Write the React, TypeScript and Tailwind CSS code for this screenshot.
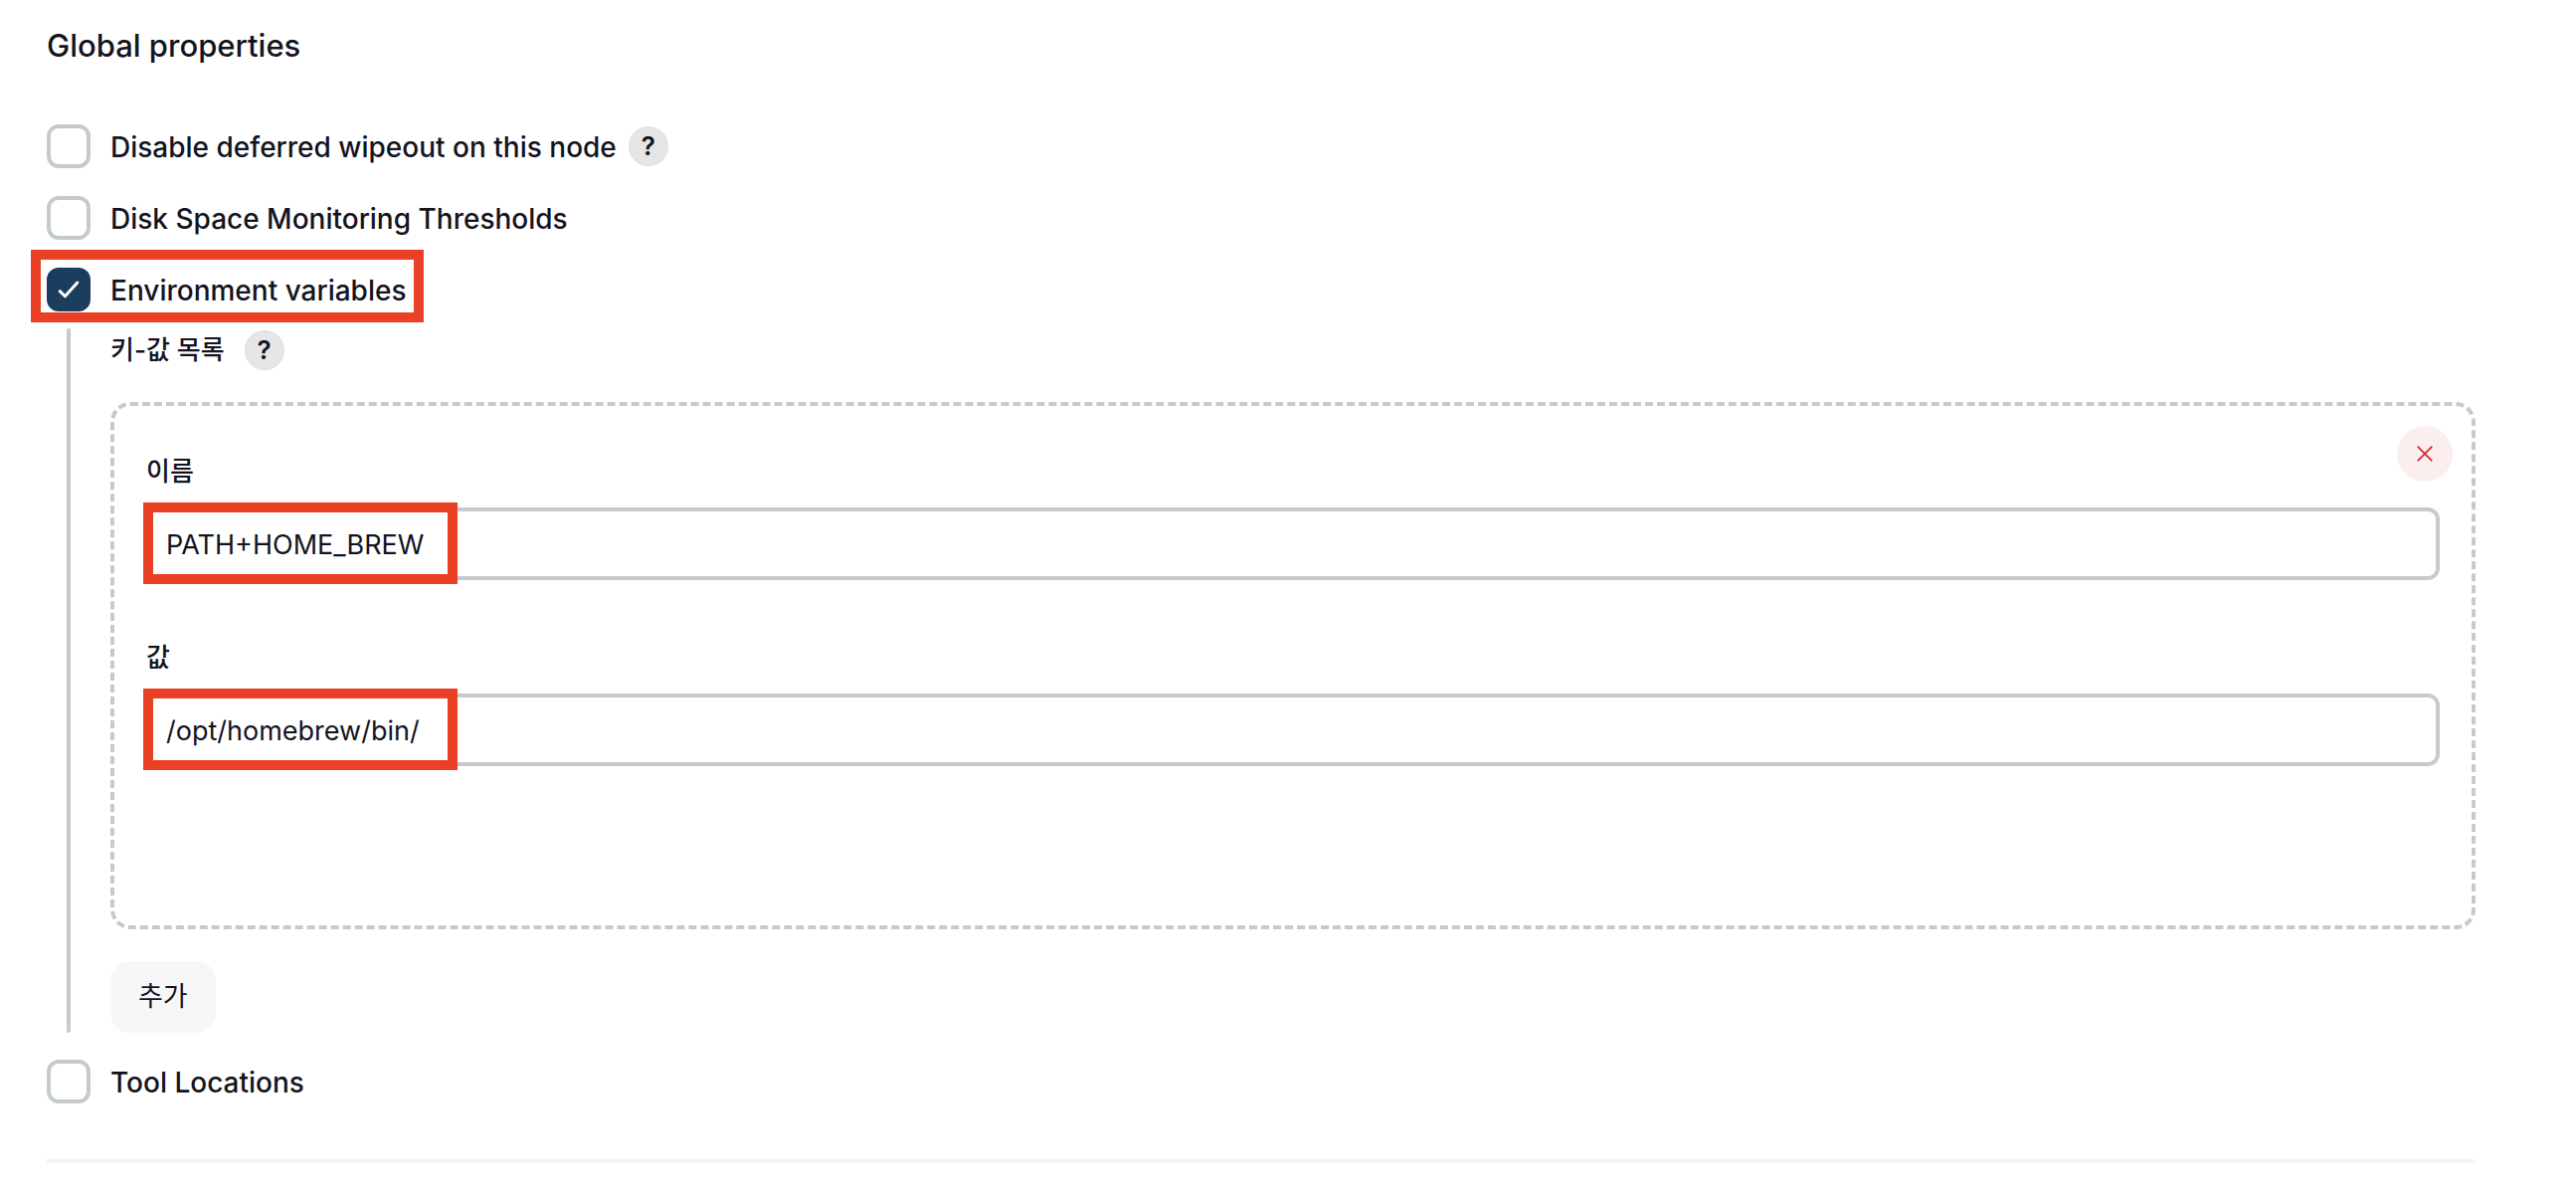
import React, { useState } from 'react';

const FONT = "font-['Inter','Noto_Sans_CJK_KR',sans-serif]";

// =====================
// Small parts
// =====================
const HelpButton: React.FC<{ label: string }> = ({ label }) => (
    <button
        type="button"
        aria-label={label}
        className="flex h-10 w-10 shrink-0 items-center justify-center rounded-full border-2 border-[#e3e3e3] bg-[#e6e6e6] text-[26px] leading-[26px] font-semibold"
    >
        ?
    </button>
);

const Highlight: React.FC<{ className: string }> = ({ className }) => (
    <span className={`pointer-events-none absolute border-[10px] border-[#ea4025] ${className}`} />
);

interface CheckRowProps {
    id: string;
    label: string;
    checked: boolean;
    onChange: (checked: boolean) => void;
    help?: boolean;
    highlighted?: boolean;
}

const CheckRow: React.FC<CheckRowProps> = ({ id, label, checked, onChange, help, highlighted }) => (
    <div className="relative flex h-11 items-center">
        <span className="relative flex h-11 w-11 shrink-0">
            <input
                id={id}
                type="checkbox"
                checked={checked}
                onChange={(e) => onChange(e.target.checked)}
                className="h-11 w-11 appearance-none rounded-[12px] border-4 border-[#c4cbce] bg-white checked:border-[#1b3d5e] checked:bg-[#1b3d5e]"
            />
            {checked && (
                <svg viewBox="0 0 44 44" fill="none" className="pointer-events-none absolute inset-0 h-11 w-11">
                    <path
                        d="M13.2 23.6L18.4 28.8L30.8 15"
                        stroke="white"
                        strokeWidth="3"
                        strokeLinecap="round"
                        strokeLinejoin="round"
                    />
                </svg>
            )}
        </span>
        <label htmlFor={id} className="pt-0.5 pl-5 text-[28px] leading-10 font-medium">
            {label}
        </label>
        {help && (
            <div className="ml-3">
                <HelpButton label={`Help for feature: ${label}`} />
            </div>
        )}
        {highlighted && <Highlight className="-top-[18px] -left-4 h-[73px] w-[395px]" />}
    </div>
);

interface TextFieldProps {
    id: string;
    label: string;
    value: string;
    onChange: (value: string) => void;
}

const TextField: React.FC<TextFieldProps> = ({ id, label, value, onChange }) => (
    <div>
        <label htmlFor={id} className="block text-[26px] leading-10 font-medium">
            {label}
        </label>
        <div className="relative mt-4">
            <input
                id={id}
                type="text"
                value={value}
                onChange={(e) => onChange(e.target.value)}
                className="block h-[73px] w-full rounded-[12px] border-4 border-[#c4cbce] bg-white px-4 pt-0.5 text-[27px]"
            />
            <Highlight className="-top-[5px] -left-[3px] h-[82px] w-[316px]" />
        </div>
    </div>
);

// =====================
// Page
// =====================
const App: React.FC = () => {
    const [checks, setChecks] = useState({ wipeout: false, disk: false, env: true, tools: false });
    const [variable, setVariable] = useState({ name: 'PATH+HOME_BREW', value: '/opt/homebrew/bin/' });

    const toggle = (key: keyof typeof checks) => (checked: boolean) =>
        setChecks((prev) => ({ ...prev, [key]: checked }));

    return (
        <main className={`bg-white pt-[26px] pr-[101px] pb-7 pl-[47px] text-[#14141f] ${FONT}`}>
            <h2 className="text-[31px] leading-10 font-medium">Global properties</h2>

            <div className="mt-[59px] flex flex-col gap-7">
                <CheckRow
                    id="wipeout"
                    label="Disable deferred wipeout on this node"
                    checked={checks.wipeout}
                    onChange={toggle('wipeout')}
                    help
                />
                <CheckRow
                    id="disk"
                    label="Disk Space Monitoring Thresholds"
                    checked={checks.disk}
                    onChange={toggle('disk')}
                />
                <CheckRow
                    id="env"
                    label="Environment variables"
                    checked={checks.env}
                    onChange={toggle('env')}
                    highlighted
                />
            </div>

            {/* Nested settings, tied to the checkbox by the vertical rule */}
            <div className="mt-[17px] flex gap-10 pl-5">
                <div className="w-1 shrink-0 rounded-full bg-[#c4cbce]" />
                <div className="min-w-0 flex-1">
                    <div className="flex items-center gap-5 pt-0.5">
                        <h3 className="text-[26px] leading-10 font-medium">키-값 목록</h3>
                        <HelpButton label="키-값 목록" />
                    </div>

                    <div className="relative mt-8 rounded-[20px] border-4 border-dashed border-[#c4cbce] px-8 pt-[46px] pb-40">
                        <button
                            type="button"
                            aria-label="삭제"
                            className="absolute top-5 right-[19px] flex h-14 w-14 items-center justify-center rounded-full bg-[#fbeeee] text-[#d92b33]"
                        >
                            <svg viewBox="0 0 16 16" fill="none" className="h-4 w-4">
                                <path d="M0.7 0.7L15.3 15.3M15.3 0.7L0.7 15.3" stroke="currentColor" strokeWidth="1.8" />
                            </svg>
                        </button>
                        <div className="flex flex-col gap-[58px]">
                            <TextField
                                id="env-name"
                                label="이름"
                                value={variable.name}
                                onChange={(name) => setVariable({ ...variable, name })}
                            />
                            <TextField
                                id="env-value"
                                label="값"
                                value={variable.value}
                                onChange={(value) => setVariable({ ...variable, value })}
                            />
                        </div>
                    </div>

                    <button
                        type="button"
                        className="mt-8 block h-[72px] rounded-[20px] bg-[#f7f7fa] px-7 text-[27px] leading-10"
                    >
                        추가
                    </button>
                </div>
            </div>

            <div className="mt-[27px]">
                <CheckRow
                    id="tools"
                    label="Tool Locations"
                    checked={checks.tools}
                    onChange={toggle('tools')}
                />
            </div>

            <hr className="mt-14 border-t-4 border-[#f3f3f8]" />
        </main>
    );
};

export default App;
